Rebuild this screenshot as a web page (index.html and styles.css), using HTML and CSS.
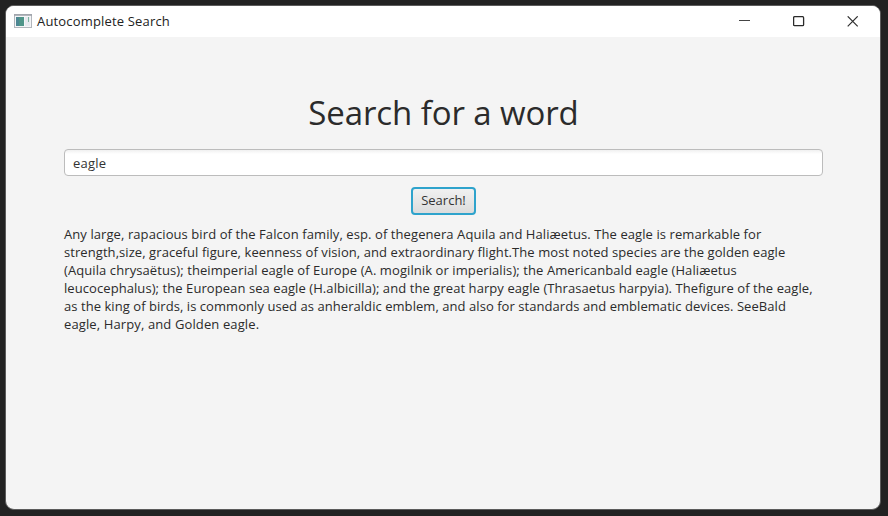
FILE: index.html
```html
<!DOCTYPE html>
<html lang="en">
<head>
<meta charset="utf-8">
<title>Autocomplete Search</title>
<link rel="stylesheet" href="styles.css">
</head>
<body>
<div class="window">
  <header class="titlebar">
    <svg class="app-icon" width="18" height="14" viewBox="0 0 18 14">
      <rect x="0.5" y="0.5" width="17" height="13" fill="#f4f5f7" stroke="#b2b6bc"/>
      <path d="M0 1h18" stroke="#9da1a9" stroke-width="1.5"/>
      <rect x="2" y="3" width="8" height="9" fill="#4f9589"/>
      <rect x="2" y="3" width="3" height="9" fill="#4c7f99" opacity=".6"/>
      <rect x="11" y="3" width="5" height="9" fill="#e6e9ef"/>
      <path d="M14.5 3v5" stroke="#7db3a0"/>
    </svg>
    <span class="title">Autocomplete Search</span>
    <div class="controls">
      <svg width="12" height="12" viewBox="0 0 12 12"><path d="M0 4.5h11" stroke="#444" fill="none"/></svg>
      <svg width="12" height="12" viewBox="0 0 12 12"><rect x="0.6" y="0.7" width="10" height="9" rx="1" fill="none" stroke="#2a2a2a" stroke-width="1.3"/></svg>
      <svg width="12" height="12" viewBox="0 0 12 12"><path d="M0.7 0.3l10 10M10.7 0.3l-10 10" stroke="#333" stroke-width="1.2" fill="none"/></svg>
    </div>
  </header>
  <main class="content">
    <h1 class="heading">Search for a word</h1>
    <input class="field" type="text" value="eagle">
    <button class="search">Search!</button>
    <p class="definition">
      <span class="line l1">Any large, rapacious bird of the Falcon family, esp. of thegenera Aquila and Haliæetus. The eagle is remarkable for</span>
      <span class="line l2">strength,size, graceful figure, keenness of vision, and extraordinary flight.The most noted species are the golden eagle</span>
      <span class="line l3">(Aquila chrysaëtus); theimperial eagle of Europe (A. mogilnik or imperialis); the Americanbald eagle (Haliæetus</span>
      <span class="line l4">leucocephalus); the European sea eagle (H.albicilla); and the great harpy eagle (Thrasaetus harpyia). Thefigure of the eagle,</span>
      <span class="line l5">as the king of birds, is commonly used as anheraldic emblem, and also for standards and emblematic devices. SeeBald</span>
      <span class="line l6">eagle, Harpy, and Golden eagle.</span>
    </p>
  </main>
</div>
</body>
</html>
```
FILE: styles.css
```css
* { box-sizing: border-box; }
body {
  margin: 0;
  height: 516px;
  padding: 5px 7px 6px 5px;
  background: #222;
  overflow: hidden;
  font-family: "Open Sans", "Noto Sans", sans-serif;
  color: #2b2b2b;
}
.window {
  height: 505px;
  border: 1px solid #5b5b5b;
  border-radius: 9px;
  background: #f4f4f4;
  overflow: hidden;
}
.titlebar {
  display: flex;
  align-items: center;
  height: 31px;
  padding: 0 21px 0 8px;
  background: #fff;
}
.app-icon { margin-right: 5px; position: relative; top: -1px; }
.title {
  margin-top: -1px;
  font-size: 13px;
  line-height: 18px;
  letter-spacing: 0.17px;
  color: #222;
  white-space: nowrap;
}
.controls { display: flex; gap: 42px; margin-left: auto; }
.controls svg { display: block; }
.content {
  display: flex;
  flex-direction: column;
  align-items: center;
  padding: 50px 57px 0 58px;
}
.heading {
  margin: 0;
  font-size: 33px;
  line-height: 52px;
  font-weight: 400;
  letter-spacing: -0.1px;
  white-space: nowrap;
}
.field {
  width: 100%;
  height: 27px;
  margin-top: 10px;
  padding: 0 8px;
  border: 1px solid #bcbcbc;
  border-radius: 4px;
  background: linear-gradient(#f0f0f0, #fff 4px);
  font: 13px "Open Sans", sans-serif;
  letter-spacing: 0.2px;
  color: #333;
  outline: none;
}
.search {
  width: 65px;
  height: 28px;
  margin-top: 11px;
  padding: 0 0 2px;
  border: 2px solid #2ea3cc;
  border-radius: 4px;
  background: linear-gradient(#f1f1f1, #dcdcdc);
  font: 13px "Open Sans", sans-serif;
  color: #333;
}
.definition { align-self: stretch; margin: 10px 0 0; font-size: 13px; line-height: 18px; }
.line { display: block; white-space: nowrap; }
.l1 { letter-spacing: 0.083px; }
.l2 { letter-spacing: 0.071px; }
.l3 { letter-spacing: 0.088px; }
.l4 { letter-spacing: 0.073px; }
.l5 { letter-spacing: 0.055px; }
.l6 { letter-spacing: 0.12px; }
```
